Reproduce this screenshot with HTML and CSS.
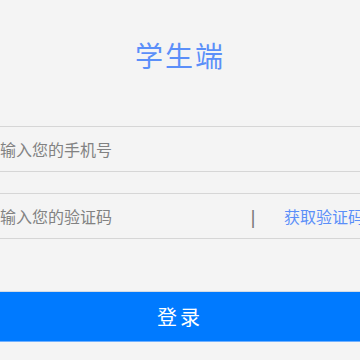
FILE: index.html
```html
<!DOCTYPE html>
<html lang="zh-CN">
<head>
    <meta charset="UTF-8">
    <meta name="viewport" content="width=device-width, initial-scale=1.0">
    <title>学生端 - 登录</title>
    <link rel="stylesheet" href="styles.css">
</head>
<body>
    <div class="page">
        <h1 class="title">学生端</h1>
        <div class="form">
            <div class="field">
                <input type="tel" class="field-input" placeholder="请输入您的手机号" maxlength="11">
            </div>
            <div class="field">
                <input type="text" class="field-input" placeholder="请输入您的验证码" maxlength="6">
                <span class="field-sep">|</span>
                <span class="get-code">获取验证码</span>
            </div>
        </div>
        <button class="login-btn">登录</button>
    </div>
</body>
</html>
```

FILE: styles.css
```css
html, body {
    margin: 0;
    padding: 0;
    overflow: hidden;
}
body {
    background-color: #f4f4f4;
    font-family: "Noto Sans CJK SC", "Noto Sans", sans-serif;
    color: #333;
}
.page {
    width: 360px;
}
.title {
    margin: 0;
    padding-top: 35px;
    font-size: 28px;
    line-height: 40px;
    font-weight: normal;
    letter-spacing: 2px;
    text-align: center;
    color: #5b8ff9;
}
.form {
    margin-top: 51px;
    margin-left: -16px;
    width: 390px;
}
.field {
    display: flex;
    align-items: center;
    height: 44px;
    border-top: 1px solid #d6d6d6;
    border-bottom: 1px solid #d6d6d6;
    margin-bottom: 21px;
}
.field:last-child {
    margin-bottom: 0;
}
.field-input {
    flex: 1;
    min-width: 0;
    height: 44px;
    padding: 0;
    border: none;
    outline: none;
    background: transparent;
    font-family: "Noto Sans CJK SC", "Noto Sans", sans-serif;
    font-size: 16px;
    color: #333;
}
.field-input::placeholder {
    color: #828282;
}
.field-sep {
    font-family: "DejaVu Sans", sans-serif;
    font-size: 18px;
    line-height: 20px;
    color: #7a7a7a;
    margin-right: 28px;
    padding-top: 3px;
}
.get-code {
    font-size: 16px;
    color: #5b8ff9;
    padding-right: 10px;
    cursor: pointer;
}
.login-btn {
    display: block;
    width: 100%;
    margin-top: 52px;
    height: 51px;
    padding: 0;
    border: none;
    border-top: 1px solid #d4dbe4;
    border-bottom: 1px solid #6fb0ff;
    background: #007aff;
    color: #fff;
    font-family: "Noto Sans CJK SC", "Noto Sans", sans-serif;
    font-size: 20px;
    letter-spacing: 3px;
    cursor: pointer;
}
```
